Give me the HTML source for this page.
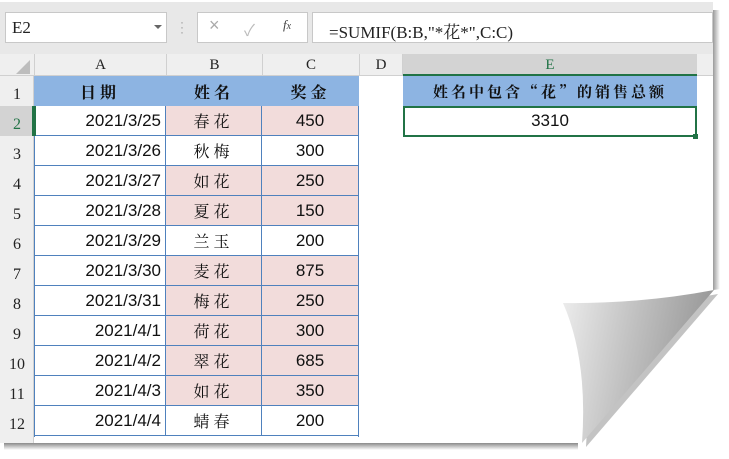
<!DOCTYPE html>
<html><head><meta charset="utf-8"><style>
*{margin:0;padding:0;box-sizing:border-box}
body{width:729px;height:459px;background:#fff;position:relative;overflow:hidden;font-family:"Liberation Sans","Noto Sans CJK SC",sans-serif}
.a{position:absolute}
.c{position:absolute;display:flex;align-items:center;justify-content:center;font-size:17px;color:#111}
.cj{font-family:"Noto Serif CJK SC","Noto Sans CJK SC",serif;letter-spacing:4px;font-size:16px}
.hd{font-family:"Liberation Serif",serif;font-size:15px;color:#222}
</style></head><body>
<div class="a" style="left:713px;top:10px;width:7px;height:290px;background:linear-gradient(90deg,#9a9a9a,#fff)"></div>
<div class="a" style="left:4px;top:443px;width:574px;height:7px;background:linear-gradient(180deg,#8a8a8a,#fff)"></div>
<div class="a" style="left:0;top:0;width:713px;height:443px;background:#fff"></div>
<div class="a" style="left:0;top:0;width:713px;height:54px;background:#e8e8e8;border-top:2px solid #fff"></div>
<div class="a" style="left:5px;top:12px;width:162px;height:31px;background:#fff;border:1px solid #c8c8c8;font-family:'Liberation Serif',serif;font-size:17px;padding:5px 0 0 6px;color:#222">E2</div>
<div class="a" style="left:154px;top:25px;width:0;height:0;border-left:4px solid transparent;border-right:4px solid transparent;border-top:4px solid #666"></div>
<div class="a" style="left:180px;top:20px;color:#999;font-size:12px;line-height:5px">·<br>·<br>·</div>
<div class="a" style="left:197px;top:12px;width:111px;height:31px;background:#fff;border:1px solid #c8c8c8"></div>
<div class="a" style="left:209px;top:15px;color:#aaa;font-size:18px">×</div>
<div class="a" style="left:244px;top:17px;color:#bbb;font-size:16px">✓</div>
<div class="a" style="left:283px;top:17px;color:#444;font-size:13px;font-style:italic;font-family:'Liberation Serif',serif">f<span style="font-size:10px">x</span></div>
<div class="a" style="left:312px;top:12px;width:401px;height:31px;background:#fff;border:1px solid #c8c8c8;font-family:'Liberation Serif','Noto Serif CJK SC',serif;font-size:17px;padding:5px 0 0 16px;color:#222">=SUMIF(B:B,"*花*",C:C)</div>
<div class="a" style="left:0;top:54px;width:713px;height:22px;background:#efefef;border-bottom:1px solid #d0d0d0"></div>
<div class="a" style="left:16px;top:60px;width:0;height:0;border-left:14px solid transparent;border-bottom:14px solid #bdbdbd"></div>
<div class="a" style="left:403px;top:54px;width:294px;height:22px;background:#d3d3d3;border-bottom:2px solid #217346"></div>
<div class="c hd" style="left:34px;top:54px;width:132px;height:22px;border-left:1px solid #d0d0d0">A</div>
<div class="c hd" style="left:166px;top:54px;width:96px;height:22px;border-left:1px solid #d0d0d0">B</div>
<div class="c hd" style="left:262px;top:54px;width:97px;height:22px;border-left:1px solid #d0d0d0">C</div>
<div class="c hd" style="left:359px;top:54px;width:44px;height:22px;border-left:1px solid #d0d0d0;border-right:1px solid #d0d0d0">D</div>
<div class="c hd" style="left:403px;top:54px;width:294px;height:22px;color:#217346">E</div>
<div class="a" style="left:0;top:76px;width:34px;height:367px;background:#efefef;border-right:1px solid #d0d0d0"></div>
<div class="a" style="left:0;top:106px;width:34px;height:30px;background:#d3d3d3;border-right:2px solid #217346"></div>
<div id="rows"></div>
<div class="a" style="left:34px;top:76px;width:325px;height:30px;background:#8db4e2"></div>
<div class="c cj" style="left:34px;top:76px;width:132px;height:30px;font-weight:bold">日期</div>
<div class="c cj" style="left:166px;top:76px;width:96px;height:30px;font-weight:bold">姓名</div>
<div class="c cj" style="left:262px;top:76px;width:97px;height:30px;font-weight:bold">奖金</div>
<div class="a" style="left:403px;top:76px;width:294px;height:30px;background:#8db4e2"></div>
<div class="c cj" style="left:403px;top:76px;width:294px;height:30px;font-weight:bold;font-size:15px;letter-spacing:3px">姓名中包含“花”的销售总额</div>
<div class="a" style="left:403px;top:106px;width:294px;height:31px;border:2px solid #217346"></div>
<div class="a" style="left:693px;top:134px;width:5px;height:5px;background:#217346"></div>
<div class="c" style="left:403px;top:106px;width:294px;height:30px">3310</div>
<script>
var d=[["2021/3/25","春花",450,1],["2021/3/26","秋梅",300,0],["2021/3/27","如花",250,1],["2021/3/28","夏花",150,1],["2021/3/29","兰玉",200,0],["2021/3/30","麦花",875,1],["2021/3/31","梅花",250,1],["2021/4/1","荷花",300,1],["2021/4/2","翠花",685,1],["2021/4/3","如花",350,1],["2021/4/4","蜻春",200,0]];
var h="";
for(var r=1;r<=12;r++){var y=76+(r-1)*30;h+='<div class="c hd" style="left:0;top:'+(y+4)+'px;width:34px;height:30px;font-size:16px;'+(r==2?'color:#217346':'')+'">'+r+'</div>';}
d.forEach(function(e,i){var y=106+i*30;
h+='<div class="a" style="left:34px;top:'+y+'px;width:132px;height:30px;border-bottom:1px solid #4f81bd;border-right:1px solid #4f81bd;text-align:right;padding:5px 4px 0 0;font-size:17px;color:#111">'+e[0]+'</div>';
h+='<div class="c cj" style="left:166px;top:'+y+'px;width:96px;height:30px;border-bottom:1px solid #4f81bd;border-right:1px solid #4f81bd;'+(e[3]?'background:#f2dcdb':'')+'">'+e[1]+'</div>';
h+='<div class="c" style="left:262px;top:'+y+'px;width:97px;height:30px;border-bottom:1px solid #4f81bd;border-right:1px solid #4f81bd;'+(e[3]?'background:#f2dcdb':'')+'">'+e[2]+'</div>';});
h+='<div class="a" style="left:34px;top:76px;width:325px;height:361px;border-right:1px solid #4f81bd;border-left:1px solid #4f81bd"></div>';
h+='<div class="a" style="left:34px;top:106px;width:2px;height:30px;background:#217346"></div>';
document.getElementById("rows").innerHTML=h;
</script>
<svg class="a" style="left:0;top:0" width="729" height="459">
<defs><linearGradient id="g" x1="0" y1="0" x2="1" y2="0.2"><stop offset="0" stop-color="#ededed"/><stop offset="0.5" stop-color="#c0c0c0"/><stop offset="1" stop-color="#969696"/></linearGradient></defs>
<path d="M578 459 L729 459 L729 288 L713 290 L578 443 Z" fill="#fff"/>
<path d="M563 303 Q640 304 714 290 L582 443 Q588 360 563 303 Z" fill="#888" transform="translate(4,4)" opacity="0.5"/>
<path d="M563 303 Q640 304 714 290 L582 443 Q588 360 563 303 Z" fill="url(#g)"/>
</svg>
</body></html>
